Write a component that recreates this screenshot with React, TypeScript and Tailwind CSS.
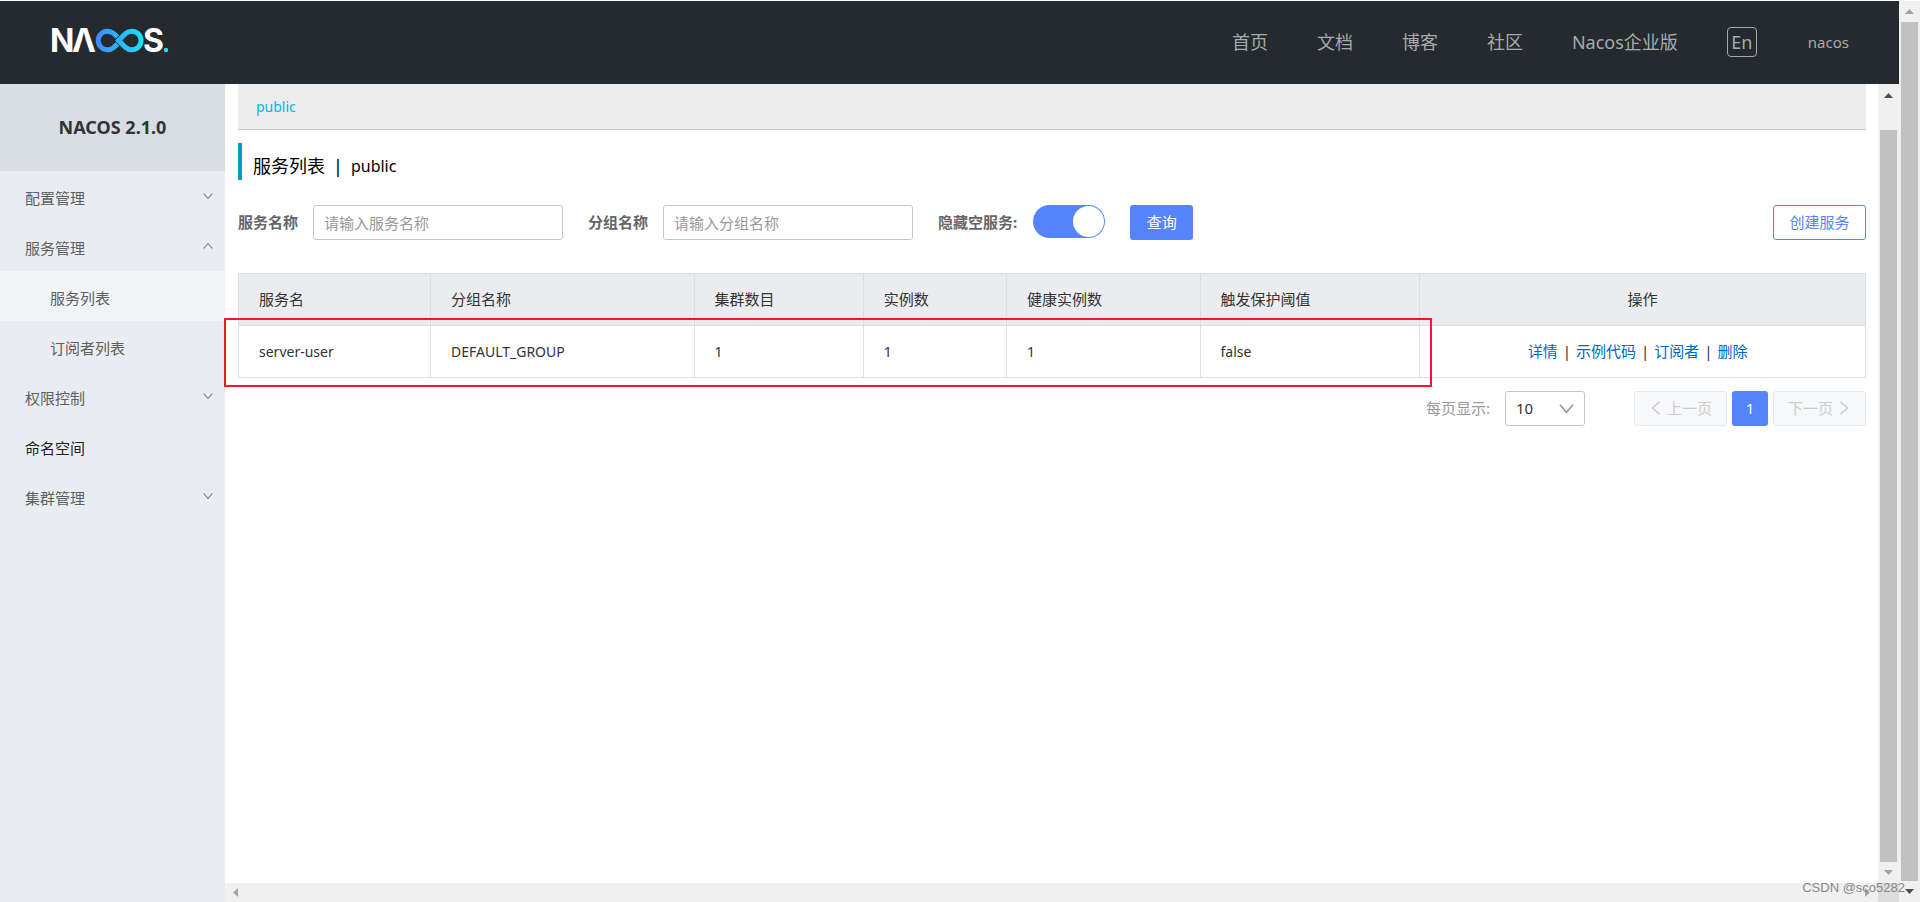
import React, { useState } from "react"

interface MenuItem {
  id: string
  title: string
  children?: string[]
  dark?: boolean
}

const navLinks = ["首页", "文档", "博客", "社区", "Nacos企业版"]

const menu: MenuItem[] = [
  { id: "config", title: "配置管理", children: ["配置列表", "历史版本", "监听查询"] },
  { id: "service", title: "服务管理", children: ["服务列表", "订阅者列表"] },
  { id: "auth", title: "权限控制", children: ["用户列表", "角色管理", "权限管理"] },
  { id: "namespace", title: "命名空间", dark: true },
  { id: "cluster", title: "集群管理", children: ["节点列表"] },
]

const columns = [
  { title: "服务名", width: "w-[11.8%]" },
  { title: "分组名称", width: "w-[16.2%]" },
  { title: "集群数目", width: "w-[10.4%]" },
  { title: "实例数", width: "w-[8.8%]" },
  { title: "健康实例数", width: "w-[11.9%]" },
  { title: "触发保护阈值", width: "w-[13.5%]" },
]

const services = [
  { name: "server-user", group: "DEFAULT_GROUP", clusters: 1, instances: 1, healthy: 1, threshold: "false" },
]

const actions = ["详情", "示例代码", "订阅者", "删除"]

function Logo() {
  return (
    <svg width="124" height="44" viewBox="-4 -8 124 44" aria-label="Nacos">
      <defs>
        <linearGradient id="loop" gradientUnits="userSpaceOnUse" x1="43" y1="0" x2="92" y2="0">
          <stop offset="0" stopColor="#4186ff" />
          <stop offset="1" stopColor="#17e6f5" />
        </linearGradient>
      </defs>
      <g fill="#fff" fontFamily="Inter, sans-serif" fontSize="32" fontWeight="700">
        <text x="-2" y="24">N</text>
        <text x="20" y="24">Λ</text>
        <text x="91" y="24">S</text>
      </g>
      <g fill="none" stroke="url(#loop)" strokeWidth="5">
        <path d="M65.5 9 L61.5 5.4 A9.3 9.3 0 1 0 61.5 19.6 L65.5 16" />
        <path d="M66.5 12.5 L73.5 5.6 A9.3 9.3 0 1 1 73.5 19.4 Z" />
      </g>
      <circle cx="114" cy="22" r="2.2" fill="#17e6f5" />
    </svg>
  )
}

function Chevron({ dir, className }: { dir: "up" | "down" | "left" | "right"; className: string }) {
  const paths = {
    up: "M1 12 L8 4 L15 12",
    down: "M1 4 L8 12 L15 4",
    left: "M12 1 L4 8 L12 15",
    right: "M4 1 L12 8 L4 15",
  }
  return (
    <svg viewBox="0 0 16 16" className={className} fill="none" stroke="currentColor" strokeWidth="1.8">
      <path d={paths[dir]} />
    </svg>
  )
}

function Arrow({ points, className }: { points: string; className: string }) {
  return (
    <svg width="9" height="9" viewBox="0 0 9 9" className={className} fill="currentColor">
      <polygon points={points} />
    </svg>
  )
}

const UP = "0,7 4.5,2 9,7"
const DOWN = "0,2 9,2 4.5,7"
const LEFT = "7,0 7,9 2,4.5"
const RIGHT = "2,0 7,4.5 2,9"

function Header() {
  return (
    <header className="flex h-[83px] shrink-0 items-center justify-between bg-[#252a2f] pr-[50px] pb-0.5 pl-12 text-[#a8aaac]">
      <a href="#home">
        <Logo />
      </a>
      <nav className="flex items-center gap-[49px] text-[18px]">
        {navLinks.map((link) => (
          <a key={link} href="#nav">
            {link}
          </a>
        ))}
        <button className="h-[30px] w-[30px] rounded-sm border border-[#a8aaac] leading-7">En</button>
        <a href="#user" className="pl-0.5 text-[15px]">
          nacos
        </a>
      </nav>
    </header>
  )
}

function Sidebar() {
  const [open, setOpen] = useState("service")

  return (
    <aside className="w-[225px] shrink-0 bg-[#e9edf2] text-[15px] text-[#5f5f5f]">
      <h1 className="flex h-[87px] items-center justify-center bg-[#d8dde4] pb-0.5 text-[18px] font-bold text-[#333]">
        NACOS 2.1.0
      </h1>
      <ul>
        {menu.map((item) => (
          <li key={item.id}>
            <button
              onClick={() => setOpen(open === item.id ? "" : item.id)}
              className={`flex h-[50px] w-full items-center justify-between pt-1 pr-3 pl-[25px] ${item.dark ? "text-[#222]" : ""}`}
            >
              {item.title}
              {item.children && (
                <Chevron dir={open === item.id ? "up" : "down"} className="mb-1 h-[10px] w-[10px] text-[#777]" />
              )}
            </button>
            {open === item.id &&
              item.children?.map((child, i) => (
                <a
                  key={child}
                  href="#list"
                  className={`flex h-[50px] items-center pt-1 pl-[50px] ${i === 0 ? "bg-[#f1f3f7]" : ""}`}
                >
                  {child}
                </a>
              ))}
          </li>
        ))}
      </ul>
    </aside>
  )
}

function SearchForm() {
  const [hideEmpty, setHideEmpty] = useState(true)
  const label = "pb-0.5 font-bold text-[#666]"
  const input =
    "h-[35px] w-[250px] rounded-[3px] border border-[#c4c6cf] px-[10px] text-[#333] outline-none placeholder:text-[#999]"

  return (
    <form className="mt-[25px] flex items-center" onSubmit={(e) => e.preventDefault()}>
      <label htmlFor="serviceName" className={`${label} mr-[15px]`}>
        服务名称
      </label>
      <input id="serviceName" placeholder="请输入服务名称" className={input} />
      <label htmlFor="groupName" className={`${label} mr-[15px] ml-[25px]`}>
        分组名称
      </label>
      <input id="groupName" placeholder="请输入分组名称" className={input} />
      <label htmlFor="hideEmpty" className={`${label} mr-4 ml-[25px]`}>
        隐藏空服务:
      </label>
      <input
        id="hideEmpty"
        type="checkbox"
        role="switch"
        checked={hideEmpty}
        onChange={(e) => setHideEmpty(e.target.checked)}
        className="flex h-[33px] w-[72px] appearance-none items-center self-start rounded-full bg-[#c4c6cf] px-px before:h-[31px] before:w-[31px] before:rounded-full before:bg-white checked:justify-end checked:bg-[#5584ff]"
      />
      <button type="submit" className="ml-[25px] h-[35px] w-[63px] rounded-[3px] bg-[#5584ff] pb-0.5 text-white">
        查询
      </button>
      <button
        type="button"
        className="ml-auto h-[35px] w-[93px] rounded-[3px] border border-[#5584ff] pb-0.5 text-[#5584ff]"
      >
        创建服务
      </button>
    </form>
  )
}

function ServiceTable() {
  const cell = "h-[52px] border border-[#dcdee3] px-5 pb-0.5"
  const latin = "h-[52px] border border-[#dcdee3] px-5 text-sm"

  return (
    <div className="relative mt-[33px]">
      <table className="w-full table-fixed border-collapse text-left text-[#333]">
        <thead className="bg-[#ebecf0]">
          <tr>
            {columns.map((col) => (
              <th key={col.title} className={`${cell} ${col.width} font-normal`}>
                {col.title}
              </th>
            ))}
            <th className={`${cell} text-center font-normal`}>操作</th>
          </tr>
        </thead>
        <tbody>
          {services.map((s) => (
            <tr key={s.name}>
              <td className={latin}>{s.name}</td>
              <td className={latin}>{s.group}</td>
              <td className={latin}>{s.clusters}</td>
              <td className={latin}>{s.instances}</td>
              <td className={latin}>{s.healthy}</td>
              <td className={latin}>{s.threshold}</td>
              <td className="h-[52px] border border-[#dcdee3] pr-[30px] pb-0.5 pl-5 text-center">
                {actions.map((action, i) => (
                  <React.Fragment key={action}>
                    {i > 0 && <span className="mx-[5px]">|</span>}
                    <a href="#action" className="text-[#0066cc]">
                      {action}
                    </a>
                  </React.Fragment>
                ))}
              </td>
            </tr>
          ))}
        </tbody>
      </table>
      {/* highlighted row */}
      <div className="pointer-events-none absolute top-[45px] right-[434px] -bottom-[9px] -left-[14px] border-2 border-[#ed1c24]" />
    </div>
  )
}

function Pagination() {
  const pager =
    "flex h-[35px] w-[93px] items-center justify-center gap-1 rounded-[3px] border border-[#e6e7eb] bg-[#f7f8fa] pb-0.5 text-[#ccc]"

  return (
    <div className="mt-[13px] flex items-center justify-end">
      <label htmlFor="pageSize" className="mr-[15px] pb-0.5 text-[#999]">
        每页显示:
      </label>
      <div className="relative mr-[49px]">
        <select
          id="pageSize"
          className="h-[35px] w-[80px] appearance-none rounded-[3px] border border-[#c4c6cf] bg-white px-[10px] pb-0.5 text-[#333]"
        >
          <option>10</option>
          <option>20</option>
          <option>50</option>
        </select>
        <Chevron dir="down" className="pointer-events-none absolute top-[10px] right-[11px] h-[15px] w-[15px] text-[#999]" />
      </div>
      <div className="flex gap-[5px]">
        <button disabled className={pager}>
          <Chevron dir="left" className="h-[14px] w-[14px]" />
          上一页
        </button>
        <button className="h-[35px] w-[36px] rounded-[3px] bg-[#5584ff] pb-0.5 text-white">1</button>
        <button disabled className={pager}>
          下一页
          <Chevron dir="right" className="h-[14px] w-[14px]" />
        </button>
      </div>
    </div>
  )
}

export default function App() {
  return (
    <div className="relative flex h-screen overflow-hidden bg-white pt-px font-['Noto_Sans','Noto_Sans_CJK_SC',sans-serif] text-[15px] leading-5">
      <div className="flex min-w-0 flex-1 flex-col">
        <Header />
        <div className="flex min-h-0 flex-1">
          <Sidebar />
          <div className="flex min-w-0 flex-1 flex-col">
            <div className="flex min-h-0 flex-1">
              <main className="min-w-0 flex-1 pr-3 pl-[13px]">
                <div className="flex h-[46px] items-center border-b border-[#c8c8c8] bg-[#ededed] px-[18px]">
                  <a href="#public" className="text-sm text-[#00b7dd]">
                    public
                  </a>
                </div>
                <h2 className="mt-[13px] flex h-[37px] items-end border-l-4 border-[#0099cc] pb-1 pl-[11px] text-[18px] text-black">
                  <span>服务列表</span>
                  <span className="mx-2">|</span>
                  <span className="text-[16px]">public</span>
                </h2>
                <SearchForm />
                <ServiceTable />
                <Pagination />
              </main>
              <div className="flex w-[21px] flex-col items-center bg-[#f0f0f0] pr-[2px] pl-[2px]">
                <Arrow points={UP} className="my-[7px] text-[#505050]" />
                <div className="mt-[23px] w-full flex-1 bg-[#c1c1c1]" />
                <Arrow points={DOWN} className="my-[6px] text-[#a3a3a3]" />
              </div>
            </div>
            <div className="flex h-[19px] shrink-0 bg-[#f0f0f0]">
              <div className="flex flex-1 items-center justify-between px-[6px]">
                <Arrow points={LEFT} className="text-[#a3a3a3]" />
                <Arrow points={RIGHT} className="text-[#a3a3a3]" />
              </div>
              <div className="w-[21px] bg-[#dcdcdc]" />
            </div>
          </div>
        </div>
      </div>
      <div className="flex w-[21px] flex-col items-center bg-[#f0f0f0] pr-[2px] pl-[2px]">
        <Arrow points={UP} className="my-[6px] text-[#a3a3a3]" />
        <div className="w-full flex-1 bg-[#c1c1c1]" />
        <Arrow points={DOWN} className="my-[6px] text-[#505050]" />
      </div>
      <span className="absolute right-[15px] bottom-1 font-['Liberation_Sans',sans-serif] text-[13px] text-[#888]">
        CSDN @sco5282
      </span>
    </div>
  )
}
